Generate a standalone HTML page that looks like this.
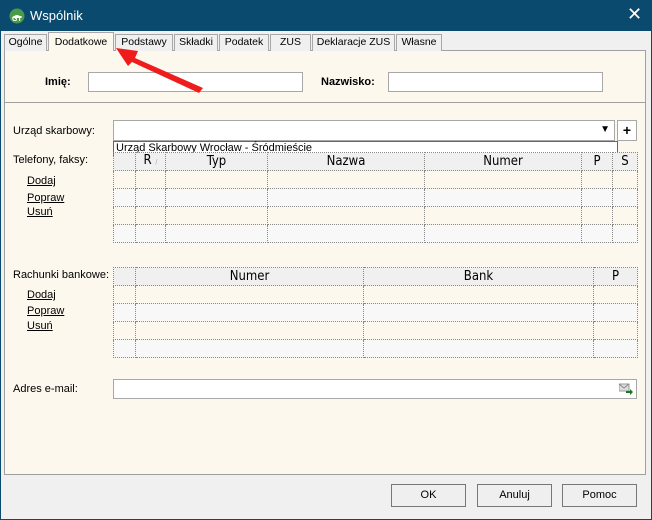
<!DOCTYPE html><html><head><meta charset="utf-8"><style>
*{box-sizing:border-box;margin:0;padding:0}
body{width:652px;height:520px;background:#0b4a6f;font-family:"Liberation Sans",sans-serif;font-size:11px;position:relative;overflow:hidden;color:#000}
.a{position:absolute}
.title{left:0;top:0;width:652px;height:31px;background:#0b4a6f;color:#fff;font-size:13px}
.win{left:1px;top:31px;width:650px;height:488px;background:#f0f0f0}
.cont{left:4px;top:50px;width:642px;height:425px;background:#fdf8ee;border:1px solid #a0a0a0}
.tab{top:34px;height:17px;background:#f0f0f0;border:1px solid #a8a8a8;border-bottom:none;text-align:center;line-height:15px;font-size:10.5px;white-space:nowrap;overflow:hidden}
.inp{background:#fff;border:1px solid #a8a8a8}
.lbl{font-size:11px}
a{color:#000;text-decoration:underline}
table{border-collapse:collapse;position:absolute;table-layout:fixed}
td{border:1px dotted #888;height:18px;padding:0;font-size:12px;text-align:center;line-height:16px;font-family:"Liberation Sans Narrow","DejaVu Sans Condensed",sans-serif}
tr.h td{background:#f0f0f0;font-size:13px}
tr.g td{background:#f8f8f8}
.btn{top:484px;height:23px;width:75px;background:#efefef;border:1px solid #777;text-align:center;line-height:21px;font-size:11px}
</style></head><body>
<div class="a title"><svg class="a" style="left:9px;top:8px" width="16" height="16"><circle cx="8" cy="8" r="7.5" fill="#4a9a4a"/><path d="M3 10 Q8 4 13 10" fill="#fff"/><text x="3" y="13" font-size="7" fill="#fff" font-family="Liberation Sans" font-weight="bold">GT</text></svg><span class="a" style="left:30px;top:8px">Wspólnik</span><span class="a" style="left:627px;top:4px;font-size:18px">✕</span></div>
<div class="a win"></div>
<div class="a cont"></div>
<div class="a tab" style="left:4px;width:43px">Ogólne</div>
<div class="a tab" style="left:48px;width:66px;top:32px;height:19px;background:#fdf8ee;line-height:19px">Dodatkowe</div>
<div class="a tab" style="left:115px;width:58px">Podstawy</div>
<div class="a tab" style="left:174px;width:44px">Składki</div>
<div class="a tab" style="left:219px;width:50px">Podatek</div>
<div class="a tab" style="left:270px;width:41px">ZUS</div>
<div class="a tab" style="left:312px;width:83px">Deklaracje ZUS</div>
<div class="a tab" style="left:396px;width:46px">Własne</div>
<b class="a lbl" style="left:45px;top:76px">Imię:</b>
<div class="a inp" style="left:88px;top:72px;width:215px;height:20px"></div>
<b class="a lbl" style="left:321px;top:76px">Nazwisko:</b>
<div class="a inp" style="left:388px;top:72px;width:215px;height:20px"></div>
<div class="a" style="left:5px;top:102px;width:640px;height:1px;background:#a0a0a0"></div>
<span class="a lbl" style="left:13px;top:125px">Urząd skarbowy:</span>
<div class="a inp" style="left:113px;top:120px;width:502px;height:21px"><span class="a" style="right:4px;top:3px;font-size:10px">▼</span></div>
<div class="a inp" style="left:617px;top:120px;width:20px;height:21px;text-align:center;font-weight:bold;font-size:14px;line-height:18px">+</div>
<div class="a" style="left:113px;top:141px;width:505px;height:15px;background:#fff;border:1px solid #666;line-height:13px;padding-left:2px;font-family:'Liberation Sans Narrow',sans-serif;font-size:11px">Urząd Skarbowy Wrocław - Śródmieście</div>
<span class="a lbl" style="left:13px;top:154px">Telefony, faksy:</span>
<a class="a" style="left:27px;top:175px">Dodaj</a><a class="a" style="left:27px;top:192px">Popraw</a><a class="a" style="left:27px;top:206px">Usuń</a>
<table style="left:113px;top:152px;width:524px"><colgroup><col style="width:22px"><col style="width:30px"><col style="width:102px"><col style="width:157px"><col style="width:157px"><col style="width:31px"><col style="width:25px"></colgroup>
<tr class="h"><td>&nbsp;</td><td>R <span style="font-size:7px;color:#aaa">/</span></td><td>Typ</td><td>Nazwa</td><td>Numer</td><td>P</td><td>S</td></tr>
<tr><td></td><td></td><td></td><td></td><td></td><td></td><td></td></tr>
<tr class="g"><td></td><td></td><td></td><td></td><td></td><td></td><td></td></tr>
<tr><td></td><td></td><td></td><td></td><td></td><td></td><td></td></tr>
<tr class="g"><td></td><td></td><td></td><td></td><td></td><td></td><td></td></tr></table>
<span class="a lbl" style="left:13px;top:269px">Rachunki bankowe:</span>
<a class="a" style="left:27px;top:289px">Dodaj</a><a class="a" style="left:27px;top:305px">Popraw</a><a class="a" style="left:27px;top:320px">Usuń</a>
<table style="left:113px;top:267px;width:524px"><colgroup><col style="width:22px"><col style="width:228px"><col style="width:230px"><col style="width:44px"></colgroup>
<tr class="h"><td>&nbsp;</td><td>Numer</td><td>Bank</td><td>P</td></tr>
<tr><td></td><td></td><td></td><td></td></tr>
<tr class="g"><td></td><td></td><td></td><td></td></tr>
<tr><td></td><td></td><td></td><td></td></tr>
<tr class="g"><td></td><td></td><td></td><td></td></tr></table>
<span class="a lbl" style="left:13px;top:383px">Adres e-mail:</span>
<div class="a inp" style="left:113px;top:379px;width:524px;height:20px"><svg class="a" style="right:3px;top:3px" width="14" height="12"><rect x="0" y="1" width="10" height="7" fill="#ddd" stroke="#999"/><path d="M0 1 L5 5 L10 1" fill="none" stroke="#888"/><path d="M7 8 h4 v-2 l3 3 -3 3 v-2 h-4z" fill="#1a7a1a"/></svg></div>
<div class="a btn" style="left:391px">OK</div>
<div class="a btn" style="left:477px">Anuluj</div>
<div class="a btn" style="left:562px">Pomoc</div>
<svg class="a" style="left:0;top:0" width="652" height="520"><path d="M203 88 L135 58 L138 51 L116 48 L128 66 L132 62 L199 93 Z" fill="#ee1c1c"/></svg>
</body></html>
